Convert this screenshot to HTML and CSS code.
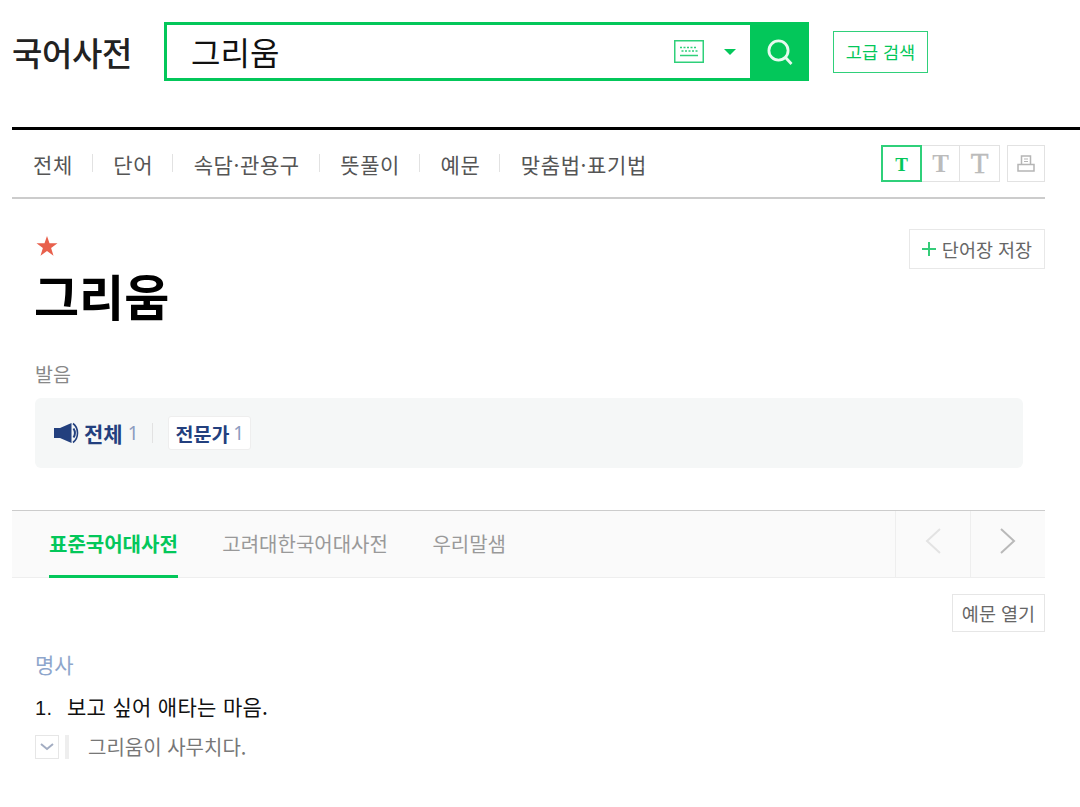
FILE: index.html
```html
<!DOCTYPE html>
<html lang="ko">
<head>
<meta charset="utf-8">
<title>국어사전</title>
<link rel="stylesheet" href="styles.css">
</head>
<body>
<div class="page">
  <header class="head">
    <h1 class="logo">국어사전</h1>
    <form class="search">
      <div class="search-field">
        <span class="query">그리움</span>
        <svg class="kbd" width="30" height="23" viewBox="0 0 30 23" fill="none" stroke="#2fd07a">
          <rect x="0.75" y="0.75" width="28.5" height="21.5" stroke-width="1.5"/>
          <path d="M6 7.500h2M9.500 7.500h2M13 7.500h2M16.500 7.500h2M20 7.500h2M7.500 11h2M11 11h2M14.500 11h2M18 11h2M21.500 11h2" stroke-width="1.300"/>
          <path d="M6 15.500h18" stroke-width="1.500"/>
        </svg>
        <span class="caret"></span>
      </div>
      <button class="search-btn" type="button">
        <svg width="28" height="28" viewBox="0 0 28 28" fill="none" stroke="#e6faef" stroke-width="2.8">
          <circle cx="12.500" cy="12.500" r="9.600"/>
          <path d="M19.500 19.500l6 6.500"/>
        </svg>
      </button>
    </form>
    <a class="adv">고급 검색</a>
  </header>
  <nav class="nav">
    <ul class="nav-list">
      <li>전체</li>
      <li>단어</li>
      <li>속담·관용구</li>
      <li>뜻풀이</li>
      <li>예문</li>
      <li>맞춤법·표기법</li>
    </ul>
    <div class="tools">
      <div class="sizes">
        <span class="size size-s">T</span>
        <span class="size size-m">T</span>
        <span class="size size-l">T</span>
      </div>
      <span class="print">
        <svg width="18" height="18" viewBox="0 0 18 18" fill="none" stroke="#b5b5b5" stroke-width="1.5">
          <path d="M4.500 9V1h9v8"/>
          <path d="M7 4h4M7 6.500h4" stroke-width="1"/>
          <path d="M1 9.500h16v6.500H1z"/>
        </svg>
      </span>
    </div>
  </nav>
  <section class="entry">
    <div class="entry-top">
      <div>
        <div class="star">
          <svg width="22" height="20" viewBox="0 0 22 20"><path d="M11 0l2.500 7.300H21.500l-6.400 4.700 2.400 7.700L11 15l-6.500 4.700 2.400-7.700L0.500 7.300H8.500z" fill="#e8604c"/></svg>
        </div>
        <h2 class="word">그리움</h2>
      </div>
      <button class="save" type="button"><span class="plus"></span>단어장 저장</button>
    </div>
    <div class="pron-label">발음</div>
    <div class="pron">
      <span class="pron-item">
        <svg class="speaker" width="25" height="22" viewBox="0 0 25 22">
          <path d="M0 6h6L17.500 1v20L6 16H0z" fill="#23407e"/>
          <path d="M19.500 6.500c1.800 2.800 1.800 6.200 0 9" fill="none" stroke="#23407e" stroke-width="2"/>
          <path d="M19 1.500c6 4.500 6 14.500 0 19" fill="none" stroke="#23407e" stroke-width="1.600"/>
        </svg>
        <b class="all">전체</b><span class="num">1</span>
      </span>
      <span class="pron-sep"></span>
      <span class="pron-tag"><b>전문가</b><span class="num tag-num">1</span></span>
    </div>
  </section>
  <div class="tabs">
    <ul class="tab-list">
      <li class="tab on">표준국어대사전</li>
      <li class="tab">고려대한국어대사전</li>
      <li class="tab">우리말샘</li>
    </ul>
    <div class="arrows">
      <span class="arrow">
        <svg width="16" height="26" viewBox="0 0 16 26" fill="none" stroke="#e3e3e3" stroke-width="2"><path d="M15 1L2 13l13 12"/></svg>
      </span>
      <span class="arrow">
        <svg width="16" height="26" viewBox="0 0 16 26" fill="none" stroke="#b9b9b9" stroke-width="2"><path d="M1 1l13 12L1 25"/></svg>
      </span>
    </div>
  </div>
  <div class="open-row"><button class="open" type="button">예문 열기</button></div>
  <section class="mean">
    <div class="pos">명사</div>
    <div class="def"><span class="def-num">1.</span>보고 싶어 애타는 마음.</div>
    <div class="ex">
      <span class="ex-toggle">
        <svg width="14" height="8" viewBox="0 0 14 8" fill="none" stroke="#a3adc2" stroke-width="2"><path d="M1 1l6 5 6-5"/></svg>
      </span>
      <span class="ex-bar"></span>
      <span class="ex-text">그리움이 사무치다.</span>
    </div>
  </section>
</div>
</body>
</html>
```

FILE: styles.css
```css
* { box-sizing: border-box; }
html, body { margin: 0; padding: 0; background: #fff; }
body {
  height: 807px;
  overflow: hidden;
  font-family: "Noto Sans CJK KR", "Noto Sans", sans-serif;
  color: #000;
}
ul { list-style: none; margin: 0; padding: 0; }
h1, h2 { margin: 0; }
button { font-family: inherit; margin: 0; cursor: pointer; }
.page { padding-left: 12px; }

.head {
  height: 130px;
  border-bottom: 3px solid #000;
  padding-top: 22px;
  display: flex;
  align-items: flex-start;
}
.logo {
  width: 152px;
  font-size: 33px;
  font-weight: 500;
  line-height: 60px;
  letter-spacing: -0.4px;
  color: #222;
}
.search { display: flex; width: 645px; height: 59px; }
.search-field {
  flex: 1;
  border: 3px solid #03c75a;
  border-right: 0;
  display: flex;
  align-items: center;
  padding-left: 24px;
}
.query { font-size: 32px; line-height: 53px; flex: 1; color: #111; }
.kbd { margin-right: 20px; }
.caret {
  width: 0; height: 0;
  border: 6px solid transparent;
  border-top: 6px solid #03c75a;
  border-bottom: 0;
  margin-right: 14px;
}
.search-btn {
  width: 59px;
  height: 59px;
  background: #03c75a;
  border: 0;
  padding: 0;
  display: flex;
  align-items: center;
  justify-content: center;
}
.adv {
  margin: 9px 0 0 24px;
  width: 95px;
  height: 42px;
  border: 1px solid #2fd07a;
  color: #03c75a;
  font-size: 17.5px;
  line-height: 40px;
  text-align: center;
  white-space: nowrap;
}

.nav {
  width: 1033px;
  height: 69px;
  border-bottom: 2px solid #ccc;
  display: flex;
  justify-content: space-between;
  padding: 15px 0 0 21px;
}
.nav-list { display: flex; }
.nav-list li {
  font-size: 21px;
  letter-spacing: 0.6px;
  line-height: 38px;
  color: #555;
  padding-right: 20px;
  margin-right: 20.500px;
  position: relative;
}
.nav-list li:not(:last-child)::after {
  content: "";
  position: absolute;
  right: 0;
  top: 9px;
  width: 1px;
  height: 18px;
  background: #e2e2e2;
}
.tools { display: flex; gap: 7px; }
.sizes { display: flex; }
.size {
  height: 37px;
  border: 1px solid #e2e2e2;
  border-left: 0;
  font-family: "Liberation Serif", serif;
  font-weight: 700;
  color: #bbb;
  display: flex;
  align-items: center;
  justify-content: center;
}
.size-s { width: 41px; font-size: 19px; border: 2px solid #2fd07a; color: #03c75a; padding-top: 2px; }
.size-m { width: 38px; font-size: 25px; padding-top: 1px; }
.size-l { width: 40px; font-size: 29px; font-weight: 400; -webkit-text-stroke: 0.5px #bbb; }
.print {
  width: 38px;
  height: 37px;
  border: 1px solid #e2e2e2;
  display: flex;
  align-items: center;
  justify-content: center;
}

.entry { width: 1033px; padding: 30px 0 0 23px; }
.entry-top { display: flex; justify-content: space-between; align-items: flex-start; }
.star { height: 35px; padding-top: 7px; margin-left: 1px; }
.star svg { display: block; }
.word { font-size: 49px; font-weight: 700; line-height: 62px; margin-left: -1px; }
.save {
  width: 136px;
  height: 40px;
  background: #fff;
  border: 1px solid #e8e8e8;
  color: #666;
  font-size: 18.5px;
  display: flex;
  align-items: center;
  justify-content: center;
  padding: 0;
  white-space: nowrap;
}
.plus {
  width: 14px;
  height: 14px;
  margin-right: 6px;
  background:
    linear-gradient(#35cc79, #35cc79) center / 100% 2px no-repeat,
    linear-gradient(#35cc79, #35cc79) center / 2px 100% no-repeat;
}
.pron-label { font-size: 19.5px; line-height: 26px; color: #888; margin-top: 35px; }
.pron {
  width: 988px;
  height: 70px;
  margin-top: 11px;
  background: #f5f7f7;
  border-radius: 6px;
  display: flex;
  align-items: center;
  padding-left: 19px;
  font-size: 19.5px;
  color: #23407e;
}
.pron b { font-weight: 700; }
.pron .all { font-size: 21px; }
.pron-item { display: flex; align-items: center; }
.speaker { margin-right: 5px; }
.num { font-size: 19px; color: #8c9cc0; margin-left: 5px; font-family: "Noto Sans", sans-serif; }
.tag-num { margin-left: 4px; }
.pron-sep { width: 1px; height: 20px; background: #e2e2e2; margin: 0 15px 0 13px; }
.pron-tag {
  height: 34px;
  padding: 0 6px 0 7px;
  background: #fff;
  border: 1px solid #eee;
  border-radius: 3px;
  display: flex;
  align-items: center;
}

.tabs {
  width: 1033px;
  height: 68px;
  margin-top: 42px;
  background: #fafafa;
  border-top: 1px solid #ccc;
  border-bottom: 1px solid #eee;
  display: flex;
  justify-content: space-between;
}
.tab-list { display: flex; padding-left: 37px; gap: 44.500px; }
.tab {
  font-size: 20px;
  line-height: 66px;
  height: 67px;
  color: #999;
}
.tab.on { color: #03c75a; font-weight: 700; border-bottom: 3px solid #03c75a; }
.arrows { display: flex; }
.arrow {
  width: 75px;
  border-left: 1px solid #eee;
  display: flex;
  align-items: center;
  justify-content: center;
  padding-bottom: 6px;
}
.open-row { width: 1033px; display: flex; justify-content: flex-end; margin-top: 16px; }
.open {
  width: 93px;
  height: 38px;
  padding: 0;
  background: #fff;
  border: 1px solid #e6e6e6;
  color: #666;
  font-size: 18.5px;
}
.mean { padding: 0 0 0 23px; }
.pos { font-size: 21px; line-height: 28px; color: #8ea6cc; margin-top: 18px; }
.def { font-size: 21px; letter-spacing: 0.3px; line-height: 30px; margin-top: 13px; color: #111; }
.def-num { display: inline-block; width: 32px; font-family: "Liberation Sans", sans-serif; font-size: 20px; }
.ex { display: flex; align-items: center; height: 24px; margin-top: 12px; }
.ex-toggle {
  width: 24px;
  height: 24px;
  border: 1px solid #e6e6e6;
  display: flex;
  align-items: center;
  justify-content: center;
}
.ex-bar { width: 4px; height: 24px; background: #eee; margin-left: 6px; }
.ex-text { font-size: 20px; color: #777; margin-left: 19px; line-height: 24px; }
```
